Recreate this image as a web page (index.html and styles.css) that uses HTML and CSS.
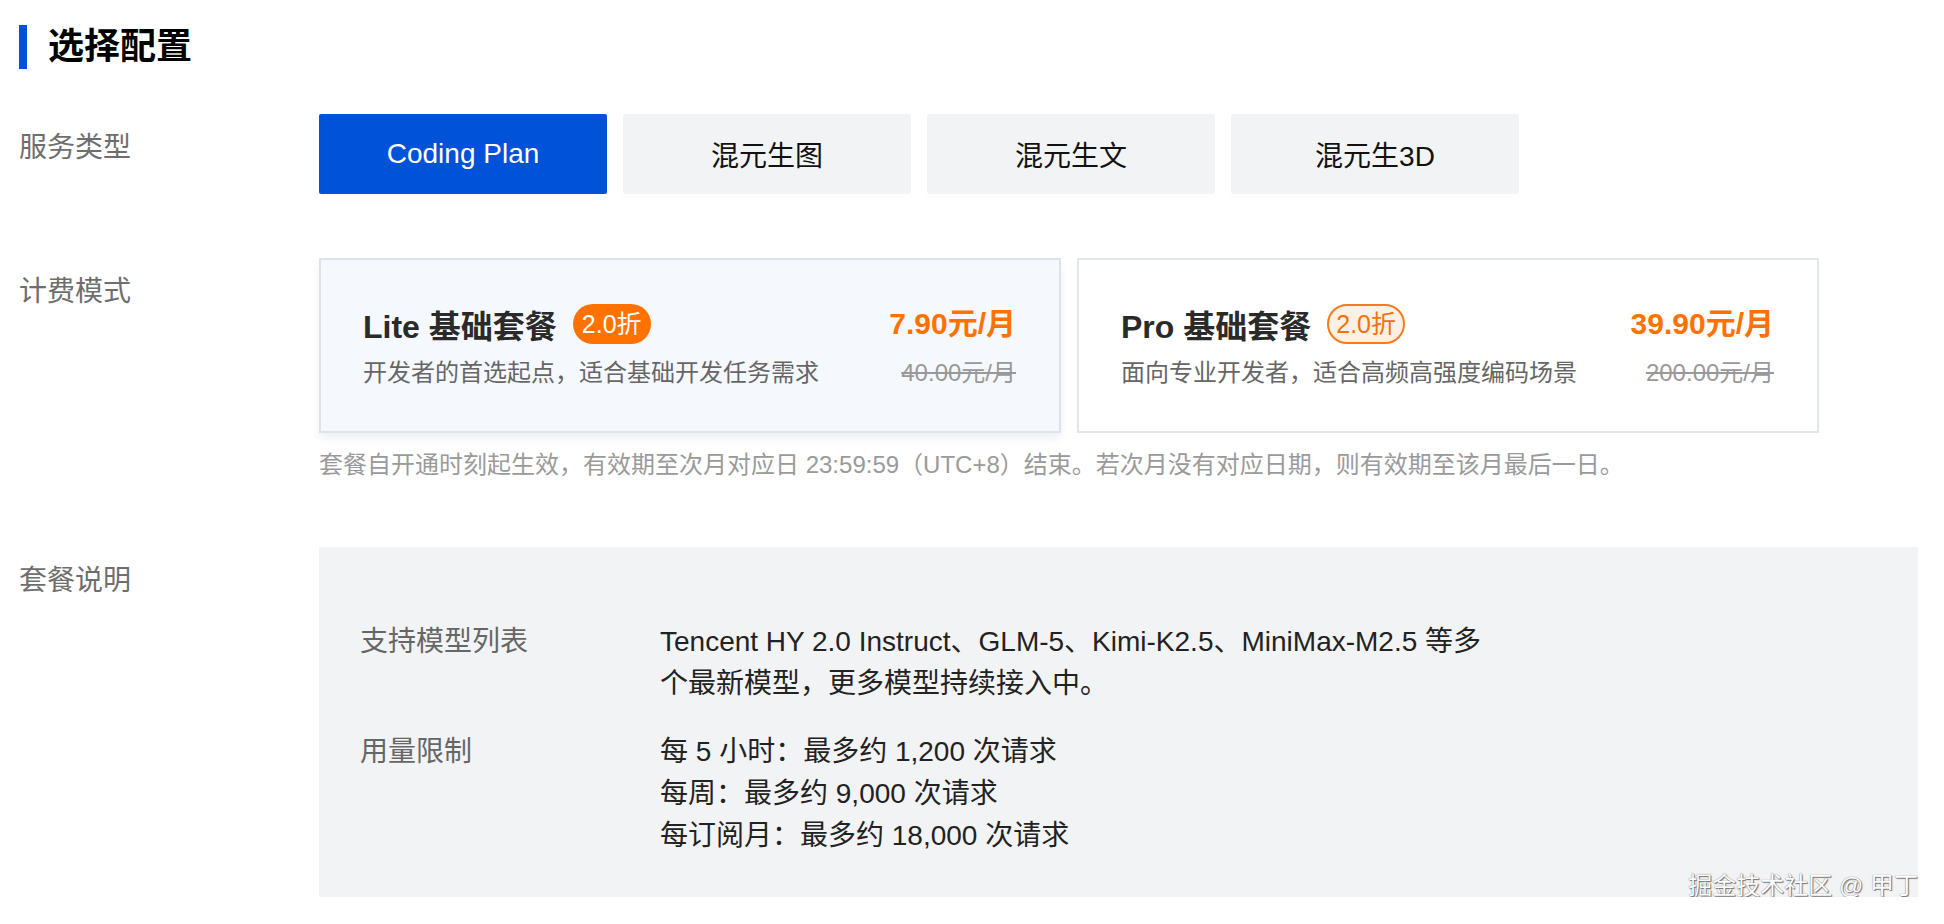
FILE: index.html
```html
<!DOCTYPE html>
<html lang="zh-CN">
<head>
  <meta charset="UTF-8" />
  <meta name="viewport" content="width=device-width, initial-scale=1.0"/>
  <title>选择配置</title>
  <link rel="stylesheet" href="styles.css">
</head>
<body>
  <div class="page">
    <h2 class="section-title">选择配置</h2>

    <div class="row">
      <div class="row-label">服务类型</div>
      <div class="row-body">
        <div class="tabs">
          <button class="tab active">Coding Plan</button>
          <button class="tab">混元生图</button>
          <button class="tab">混元生文</button>
          <button class="tab">混元生3D</button>
        </div>
      </div>
    </div>

    <div class="row">
      <div class="row-label">计费模式</div>
      <div class="row-body">
        <div class="plans">
          <div class="plan selected">
            <div class="plan-info">
              <div class="plan-title">Lite 基础套餐 <span class="discount">2.0折</span></div>
              <div class="plan-desc">开发者的首选起点，适合基础开发任务需求</div>
            </div>
            <div class="plan-price">
              <div class="price">7.90元/月</div>
              <div class="old-price">40.00元/月</div>
            </div>
          </div>
          <div class="plan">
            <div class="plan-info">
              <div class="plan-title">Pro 基础套餐 <span class="discount outline">2.0折</span></div>
              <div class="plan-desc">面向专业开发者，适合高频高强度编码场景</div>
            </div>
            <div class="plan-price">
              <div class="price">39.90元/月</div>
              <div class="old-price">200.00元/月</div>
            </div>
          </div>
        </div>
        <div class="note">套餐自开通时刻起生效，有效期至次月对应日 23:59:59（UTC+8）结束。若次月没有对应日期，则有效期至该月最后一日。</div>
      </div>
    </div>

    <div class="row">
      <div class="row-label">套餐说明</div>
      <div class="row-body">
        <div class="detail-box">
          <dl class="detail">
            <dt>支持模型列表</dt>
            <dd>Tencent HY 2.0 Instruct、GLM-5、Kimi-K2.5、MiniMax-M2.5 等多个最新模型，更多模型持续接入中。</dd>
            <dt>用量限制</dt>
            <dd>
              每 5 小时：最多约 1,200 次请求<br>
              每周：最多约 9,000 次请求<br>
              每订阅月：最多约 18,000 次请求
            </dd>
          </dl>
          <div class="watermark">掘金技术社区 @ 甲丁</div>
        </div>
      </div>
    </div>
  </div>
</body>
</html>
```

FILE: styles.css
```css
body {
  margin: 0;
  font-family: "Liberation Sans", "Noto Sans CJK SC", sans-serif;
  background: #fff;
  color: #222;
}

.page {
  padding: 25px 26px 0 19px;
}

.section-title {
  margin: 0;
  height: 44px;
  line-height: 44px;
  border-left: 8px solid #0052d9;
  padding-left: 21px;
  font-size: 36px;
  font-weight: bold;
  color: #000;
}

.row {
  display: flex;
  margin-top: 64px;
}

.section-title + .row {
  margin-top: 45px;
}

.row-label {
  width: 300px;
  flex-shrink: 0;
  padding-top: 14px;
  font-size: 28px;
  line-height: 40px;
  color: #6e6e6e;
}

.row-body {
  flex: 1;
}

.tabs {
  display: flex;
  gap: 16px;
}

.tab {
  width: 288px;
  height: 80px;
  border: none;
  border-radius: 2px;
  background: #f2f3f5;
  color: #111;
  font-family: inherit;
  font-size: 28px;
  cursor: pointer;
}

.tab.active {
  background: #0052d9;
  color: #fff;
}

.plans {
  display: flex;
  gap: 16px;
}

.plan {
  width: 742px;
  height: 175px;
  box-sizing: border-box;
  border: 2px solid #e3e6eb;
  background: #fff;
  padding: 4px 43px 0 42px;
  display: flex;
  align-items: center;
  justify-content: space-between;
}

.plan.selected {
  background: #f5f8fd;
  border-color: #dde3ec;
  box-shadow: 0 6px 8px rgba(0, 20, 60, 0.06);
}

.plan-title {
  display: flex;
  align-items: center;
  gap: 16px;
  height: 40px;
  font-size: 32px;
  font-weight: bold;
  color: #2a2a2a;
}

.discount {
  height: 40px;
  line-height: 40px;
  box-sizing: border-box;
  padding: 0 9px;
  border-radius: 20px;
  background: #ff7200;
  color: #fff;
  font-size: 25px;
  font-weight: normal;
}

.discount.outline {
  line-height: 36px;
  border: 2px solid #f77b1c;
  background: #fff0e4;
  color: #f0730e;
  padding: 0 7px;
}

.plan-desc {
  margin-top: 11px;
  font-size: 24px;
  line-height: 36px;
  color: #666;
}

.plan-price {
  text-align: right;
}

.price {
  font-size: 30px;
  line-height: 40px;
  font-weight: bold;
  color: #ff7200;
}

.old-price {
  margin-top: 11px;
  font-size: 24px;
  line-height: 36px;
  color: #999;
  text-decoration: line-through;
}

.note {
  margin-top: 14px;
  font-size: 24px;
  line-height: 36px;
  color: #9a9a9a;
}

.detail-box {
  position: relative;
  background: #f2f3f5;
  padding: 74px 40px 40px 41px;
}

.detail {
  display: grid;
  grid-template-columns: 300px 830px;
  row-gap: 26px;
  margin: 0;
  font-size: 28px;
  line-height: 42px;
}

.detail dt {
  color: #666;
}

.detail dd {
  margin: 0;
  color: #222;
}

.watermark {
  position: absolute;
  right: 0;
  bottom: -4px;
  font-size: 24px;
  line-height: 30px;
  color: #fff;
  text-shadow: 0 0 1px #555, 1px 1px 1px #777;
}
```
